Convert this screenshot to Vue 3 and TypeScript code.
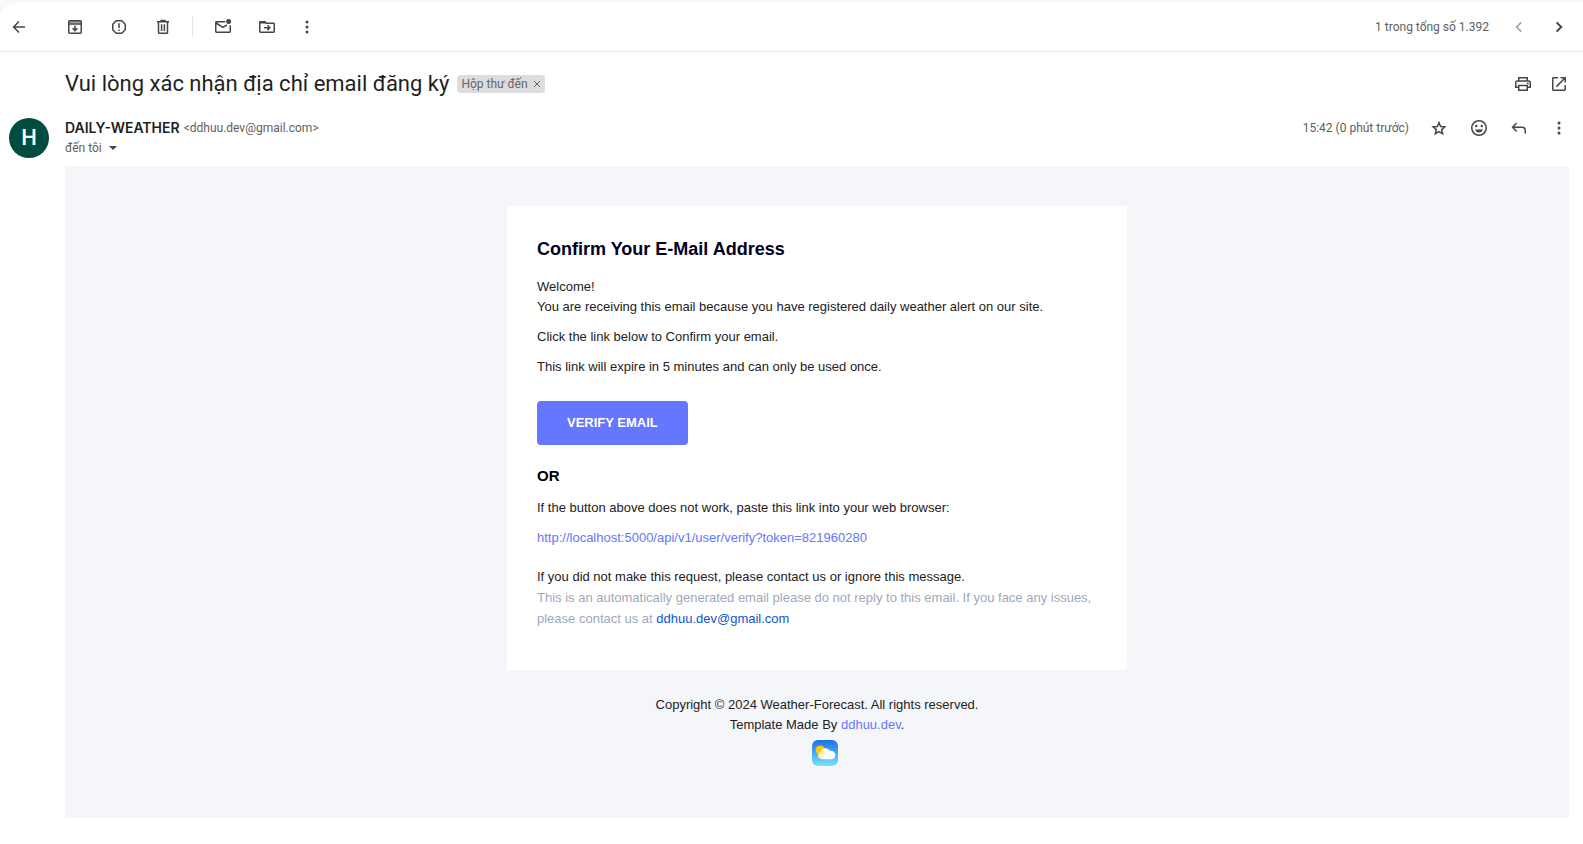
<script setup lang="ts">
interface Sender {
  initial: string
  name: string
  email: string
}

const subject = 'Vui lòng xác nhận địa chỉ email đăng ký'
const sender: Sender = {
  initial: 'H',
  name: 'DAILY-WEATHER',
  email: '<ddhuu.dev@gmail.com>',
}
const verifyUrl = 'http://localhost:5000/api/v1/user/verify?token=821960280'
</script>

<template>
  <div class="app">
    <header class="toolbar">
      <button class="icon-btn back" type="button" aria-label="Quay lại">
        <svg viewBox="0 0 20 20"><path d="M16 10H4.8M10 4.4 4.6 10 10 15.6" /></svg>
      </button>
      <div class="group">
        <button class="icon-btn" type="button" aria-label="Lưu trữ">
          <svg viewBox="0 0 20 20">
            <path class="shade" d="M4 4h12v2.5H4z" />
            <rect x="3.75" y="3.75" width="12.5" height="12.5" rx="1" />
            <path d="M4 6.9h12M10 8.5v5M7.6 11.2l2.4 2.4 2.4-2.4" />
          </svg>
        </button>
        <button class="icon-btn" type="button" aria-label="Báo cáo spam">
          <svg viewBox="0 0 20 20">
            <path d="M7.2 3.75h5.6l3.45 3.45v5.6l-3.45 3.45H7.2L3.75 12.8V7.2z" />
            <path d="M10 6.2v4.9M10 12.4v1.5" />
          </svg>
        </button>
        <button class="icon-btn" type="button" aria-label="Xóa">
          <svg viewBox="0 0 20 20">
            <path d="M4 4.75h12M8 4V3.5h4V4M5.5 5v10.5q0 .75.75.75h7.5q.75 0 .75-.75V5M8.6 7.3v6.6M11.4 7.3v6.6" />
          </svg>
        </button>
      </div>
      <span class="divider"></span>
      <div class="group">
        <button class="icon-btn" type="button" aria-label="Đánh dấu là chưa đọc">
          <svg viewBox="0 0 20 20">
            <path d="M12.2 4.75H3.4q-.65 0-.65.7v9.1q0 .7.65.7h13.2q.65 0 .65-.7V8.2M3 6l7 4.4 4-2.5" />
            <circle class="solid" cx="15.6" cy="4.6" r="2.5" />
          </svg>
        </button>
        <button class="icon-btn" type="button" aria-label="Di chuyển đến">
          <svg viewBox="0 0 20 20">
            <path class="solid" d="M2.7 4h5.4l2 2.6H2.7z" />
            <path d="M3.4 4.75h4.4l1.6 1.6h7.2q.65 0 .65.7v7.5q0 .7-.65.7H3.4q-.65 0-.65-.7v-9.1q0-.7.65-.7z" />
            <path d="M7 10.7h5.6M10.4 8.3l2.4 2.4-2.4 2.4" />
          </svg>
        </button>
      </div>
      <button class="icon-btn more" type="button" aria-label="Khác">
        <svg viewBox="0 0 20 20"><g class="solid"><circle cx="10" cy="5" r="1.5" /><circle cx="10" cy="10" r="1.5" /><circle cx="10" cy="15" r="1.5" /></g></svg>
      </button>
      <div class="pager">
        <span>1 trong tổng số 1.392</span>
        <button class="icon-btn" type="button" aria-label="Mới hơn" disabled>
          <svg viewBox="0 0 20 20"><path d="M12.2 5.4 7.6 10l4.6 4.6" /></svg>
        </button>
        <button class="icon-btn" type="button" aria-label="Cũ hơn">
          <svg viewBox="0 0 20 20"><path class="heavy" d="M7.6 5.4l4.6 4.6-4.6 4.6" /></svg>
        </button>
      </div>
    </header>

    <main class="thread">
      <div class="subject-row">
        <h1>{{ subject }}</h1>
        <span class="chip">
          Hộp thư đến
          <button type="button" aria-label="Xóa nhãn">
            <svg viewBox="0 0 8 8"><path d="M1 1l6 6M7 1 1 7" /></svg>
          </button>
        </span>
        <div class="actions">
          <button class="icon-btn" type="button" aria-label="In tất cả">
            <svg viewBox="0 0 20 20">
              <path d="M5.75 7V3.75h8.5V7M5.5 13.25H2.75V8.6q0-1.6 1.6-1.6h11.3q1.6 0 1.6 1.6v4.65H14.5M5.75 11.5h8.5v4.75h-8.5z" />
              <circle class="solid" cx="14.8" cy="9.4" r=".9" />
            </svg>
          </button>
          <button class="icon-btn" type="button" aria-label="Mở trong cửa sổ mới">
            <svg viewBox="0 0 20 20"><path d="M9 3.75H4.4q-.65 0-.65.65v11.2q0 .65.65.65h11.2q.65 0 .65-.65V11M11.5 3.75h4.75V8.5M16 4l-8.6 8.6" /></svg>
          </button>
        </div>
      </div>

      <div class="sender-row">
        <span class="avatar">{{ sender.initial }}</span>
        <div class="sender">
          <p><strong>{{ sender.name }}</strong><span>{{ sender.email }}</span></p>
          <p class="recipient">
            đến tôi
            <button type="button" aria-label="Hiện chi tiết">
              <svg viewBox="0 0 8 4"><path d="M0 0h8L4 4z" /></svg>
            </button>
          </p>
        </div>
        <div class="actions">
          <time>15:42 (0 phút trước)</time>
          <button class="icon-btn" type="button" aria-label="Gắn dấu sao">
            <svg viewBox="0 0 20 20"><path d="M10 4.6l1.65 3.9 4.2.36-3.2 2.76.97 4.1L10 13.55l-3.62 2.17.97-4.1-3.2-2.76 4.2-.36z" /></svg>
          </button>
          <button class="icon-btn" type="button" aria-label="Thêm biểu cảm">
            <svg viewBox="0 0 20 20">
              <circle cx="10" cy="10" r="7.25" />
              <g class="solid"><circle cx="7.2" cy="8" r="1.2" /><circle cx="12.8" cy="8" r="1.2" /><path d="M6 11.5h8q-1.2 3-4 3t-4-3z" /></g>
            </svg>
          </button>
          <button class="icon-btn" type="button" aria-label="Trả lời">
            <svg viewBox="0 0 20 20"><path d="M16.25 15.5v-3q0-3.25-3.25-3.25H4M7.6 5 3.6 9.25l4 4.25" /></svg>
          </button>
          <button class="icon-btn" type="button" aria-label="Khác">
            <svg viewBox="0 0 20 20"><g class="solid"><circle cx="10" cy="5" r="1.5" /><circle cx="10" cy="10" r="1.5" /><circle cx="10" cy="15" r="1.5" /></g></svg>
          </button>
        </div>
      </div>

      <article class="mail">
        <section class="card">
          <h2>Confirm Your E-Mail Address</h2>
          <p>Welcome!<br />You are receiving this email because you have registered daily weather alert on our site.</p>
          <p>Click the link below to Confirm your email.</p>
          <p>This link will expire in 5 minutes and can only be used once.</p>
          <a class="verify" :href="verifyUrl">VERIFY EMAIL</a>
          <h3>OR</h3>
          <p>If the button above does not work, paste this link into your web browser:</p>
          <p><a class="link" :href="verifyUrl">{{ verifyUrl }}</a></p>
          <div class="notice">
            <p>If you did not make this request, please contact us or ignore this message.</p>
            <p class="muted">This is an automatically generated email please do not reply to this email. If you face any issues, please contact us at <a href="mailto:ddhuu.dev@gmail.com">ddhuu.dev@gmail.com</a></p>
          </div>
        </section>
        <footer>
          <p>Copyright © 2024 Weather-Forecast. All rights reserved.</p>
          <p>Template Made By <a class="link" href="#">ddhuu.dev</a>.</p>
          <a class="logo" href="#" aria-label="Weather">
            <svg viewBox="0 0 28 28">
              <defs>
                <linearGradient id="sky" x1="0" y1="0" x2="0" y2="1">
                  <stop offset="0" stop-color="#1b6fe8" />
                  <stop offset="1" stop-color="#76e4ff" />
                </linearGradient>
                <linearGradient id="cloud" x1="0" y1="0" x2="1" y2="0">
                  <stop offset="0" stop-color="#ffe48a" />
                  <stop offset=".45" stop-color="#ffffff" />
                </linearGradient>
              </defs>
              <rect width="28" height="28" rx="7" fill="#fbfcff" />
              <rect x="1" y="1" width="26" height="26" rx="6" fill="url(#sky)" />
              <circle cx="9.2" cy="11" r="4.6" fill="#ffc60b" />
              <path d="M10.4 20.2a3.6 3.6 0 0 1-1-7 5.2 5.2 0 0 1 9.7-1.2 4.2 4.2 0 1 1 .4 8.2z" fill="url(#cloud)" />
            </svg>
          </a>
        </footer>
      </article>
    </main>
  </div>
</template>

<style>
body {
  margin: 0;
  background: #f6f8fc;
}
</style>

<style scoped>
.app {
  box-sizing: border-box;
  min-height: 100vh;
  padding-top: 3px;
  font-family: Roboto, 'Liberation Sans', sans-serif;
  font-size: 12px;
  line-height: 20px;
  color: #5e5e5e;
  background: linear-gradient(#f6f8fc 24px, #fff 24px);
}

h1, h2, h3, p {
  margin: 0;
}

button {
  padding: 0;
  border: 0;
  background: none;
  cursor: pointer;
}

a {
  text-decoration: none;
}

svg {
  display: block;
}

.icon-btn {
  width: 20px;
  height: 20px;
  flex: none;
}

.icon-btn:disabled {
  opacity: 0.5;
}

.icon-btn svg {
  width: 20px;
  height: 20px;
  fill: none;
  stroke: #444746;
  stroke-width: 1.5;
}

.icon-btn .solid {
  fill: #444746;
  stroke: none;
}

.icon-btn .shade {
  fill: #a0a2a1;
  stroke: none;
}

.icon-btn .heavy {
  stroke-width: 2;
}

.toolbar {
  display: flex;
  align-items: center;
  height: 48px;
  padding: 0 14px 0 9px;
  border-bottom: 1px solid #e8e9eb;
  border-radius: 16px 0 0 0;
  background: #fff;
}

.back {
  margin-right: 36px;
}

.group {
  display: flex;
  gap: 24px;
}

.divider {
  width: 1px;
  height: 20px;
  margin: 0 20px 0 19px;
  background: #e3e7ed;
}

.more {
  margin-left: 20px;
}

.pager,
.actions {
  display: flex;
  align-items: center;
  gap: 20px;
  margin-left: auto;
}

.thread {
  padding: 18px 14px 26px 9px;
  background: #fff;
}

.subject-row {
  display: flex;
  align-items: center;
  margin: 0 0 20px 56px;
}

.subject-row .actions {
  gap: 16px;
}

h1 {
  font-size: 22px;
  font-weight: 400;
  line-height: 28px;
  color: #1f1f1f;
}

.chip {
  display: flex;
  align-items: center;
  gap: 5px;
  height: 18px;
  margin-left: 8px;
  padding: 0 4px;
  border-radius: 4px;
  background: #ddd;
  color: #666;
}

.chip svg {
  width: 8px;
  height: 8px;
  fill: none;
  stroke: #666;
}

.sender-row {
  display: flex;
  align-items: flex-start;
  margin-bottom: 8px;
}

.avatar {
  width: 40px;
  margin-right: 16px;
  border-radius: 50%;
  background: #004d40;
  color: #fff;
  font-size: 22px;
  font-weight: 500;
  line-height: 40px;
  text-align: center;
}

.sender p {
  display: flex;
  align-items: center;
  gap: 4px;
}

.sender strong {
  color: #1f1f1f;
  font-family: Inter, Roboto, sans-serif;
  font-size: 14px;
  font-weight: 600;
}

.sender .recipient {
  gap: 7px;
}

.recipient svg {
  width: 8px;
  height: 4px;
  fill: #444746;
}

.mail {
  box-sizing: border-box;
  margin-left: 56px;
  padding: 40px 20px 51px;
  background: #f5f6fa;
  color: #222;
  font-family: 'Liberation Sans', Arial, sans-serif;
  font-size: 13px;
}

.card {
  box-sizing: border-box;
  max-width: 620px;
  margin: 0 auto;
  padding: 31px 30px 41px;
  background: #fff;
}

.card p {
  margin-bottom: 10px;
}

h2 {
  margin-bottom: 16px;
  color: #000022;
  font-size: 18px;
  line-height: 24px;
}

.verify {
  display: inline-block;
  margin: 14px 0 21px;
  padding: 0 30px;
  border-radius: 4px;
  background: #6576ff;
  color: #fff;
  font-weight: 700;
  line-height: 44px;
}

h3 {
  margin-bottom: 12px;
  color: #000;
  font-size: 15px;
  line-height: 20px;
}

.link {
  color: #6576ff;
}

.notice {
  margin-top: 19px;
}

.card .notice p {
  margin: 0;
}

.muted {
  color: #9ea8bb;
  line-height: 21px;
}

.muted a {
  color: #1155cc;
}

footer {
  padding-top: 25px;
  text-align: center;
}

.logo {
  display: block;
  width: 28px;
  margin: 4px auto 0;
  padding-left: 16px;
}

.logo svg {
  width: 28px;
  height: 28px;
}
</style>
